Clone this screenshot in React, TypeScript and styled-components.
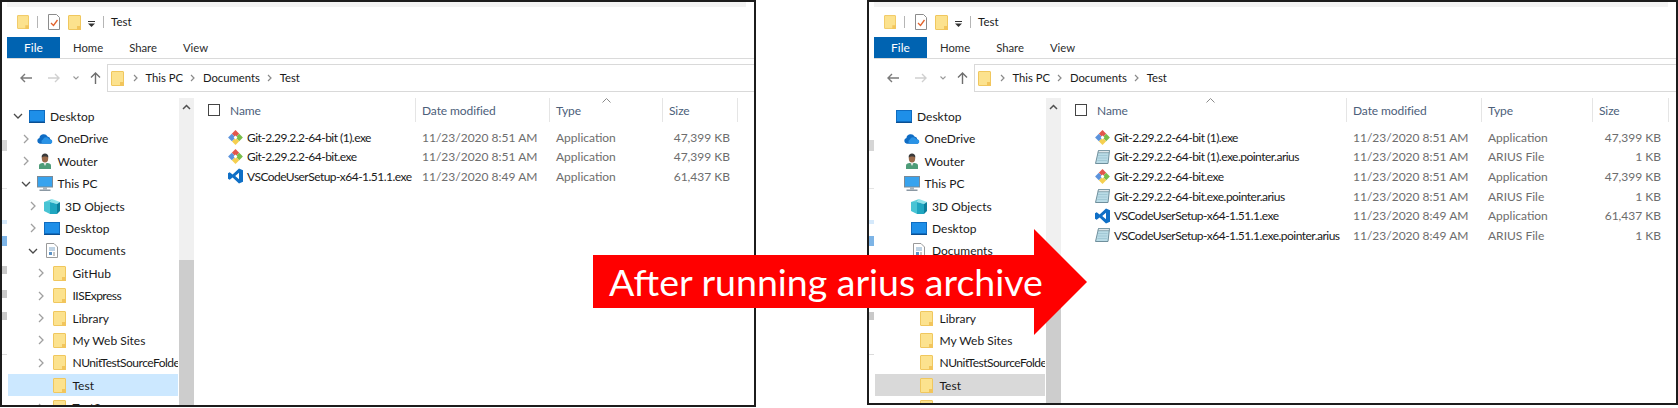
import React from "react";
import styled, { createGlobalStyle } from "styled-components";

const GlobalStyle = createGlobalStyle`
  html, body {
    margin: 0;
    padding: 0;
    background: #fff;
  }
  body {
    font-family: Lato, "Open Sans", sans-serif;
  }
`;

const uiFont = `Lato, "Open Sans", sans-serif`;

const Page = styled.div`
  position: relative;
  display: flex;
  justify-content: space-between;
  align-items: flex-start;
  width: 1678px;
  height: 408px;
  overflow: hidden;
`;

const Window = styled.section<{ $width: number; $height: number }>`
  box-sizing: border-box;
  display: flex;
  flex-direction: column;
  width: ${(p) => p.$width}px;
  height: ${(p) => p.$height}px;
  border: 2px solid #1c1c1c;
  padding-left: 5px;
  background-color: #fff;
  background-image: linear-gradient(
    to bottom,
    #fff 0 138px,
    #d6d6d6 138px 149px,
    #fff 149px 186px,
    #e4e4e4 186px 187px,
    #fff 187px 218px,
    #d5e9fb 218px 222px,
    #fff 222px 234px,
    #7db4e6 234px 244px,
    #fff 244px 264px,
    #c9c9c9 264px 272px,
    #fff 272px 288px,
    #c9c9c9 288px 296px,
    #fff 296px 310px,
    #c9c9c9 310px 318px,
    #fff 318px 352px,
    #dcdcdc 352px 353px,
    #fff 353px
  );
  background-size: 5px 100%;
  background-repeat: no-repeat;
  font-family: ${uiFont};
  font-size: 12px;
  overflow: hidden;
`;

const TopStrip = styled.div`
  height: 5px;
  flex: none;
  margin-right: 8px;
  background: #f3f3f3;
`;

const TitleBar = styled.div`
  display: flex;
  align-items: center;
  height: 30px;
  flex: none;
  padding-left: 10px;
  color: #1a1a1a;
`;

const TitleSep = styled.span<{ $gap: number }>`
  width: 1px;
  height: 12px;
  background: #b5b5b5;
  margin: 0 ${(p) => p.$gap}px 0 8px;
`;

const TitleText = styled.span`
  margin-bottom: 1px;
  font-size: 11.5px;
`;

const Tabs = styled.nav`
  display: flex;
  align-items: stretch;
  height: 22px;
  flex: none;
  box-sizing: border-box;
  border-bottom: 1px solid #dadada;
`;

const FileTab = styled.div`
  width: 53px;
  height: 21px;
  display: flex;
  align-items: center;
  justify-content: center;
  background: #0063b1;
  color: #fff;
`;

const Tab = styled.div<{ $left: number }>`
  display: flex;
  align-items: center;
  margin-left: ${(p) => p.$left}px;
  color: #2c2c2c;
  font-size: 11.3px;
`;

const AddressRow = styled.div`
  display: flex;
  height: 33px;
  flex: none;
  box-sizing: border-box;
  padding-top: 5px;
`;

const NavButtons = styled.div`
  display: flex;
  align-items: center;
  width: 100px;
  flex: none;
  padding-left: 13px;
  box-sizing: border-box;
`;

const AddressBar = styled.div`
  flex: 1;
  display: flex;
  align-items: center;
  box-sizing: border-box;
  border: 1px solid #d9d9d9;
  border-right: none;
  padding-left: 3px;
  color: #1a1a1a;
  font-size: 11.3px;
`;

const Crumb = styled.span`
  margin: 0 7.4px 1px;
`;

const Spacer = styled.span<{ $w: number }>`
  width: ${(p) => p.$w}px;
  flex: none;
`;

const Body = styled.div`
  flex: 1;
  display: flex;
  min-height: 0;
  padding-top: 6px;
`;

const Tree = styled.div`
  width: 172px;
  flex: none;
  box-sizing: border-box;
  padding: 7.3px 1px 0;
  overflow: hidden;
`;

const TreeRow = styled.div<{ $level: number; $selected?: string }>`
  display: flex;
  align-items: center;
  height: 22.4px;
  padding-left: ${(p) => 4 + p.$level * 7.5}px;
  background: ${(p) => p.$selected ?? "transparent"};
  color: #1a1a1a;
  white-space: nowrap;
  overflow: hidden;
`;

const TreeLabel = styled.span<{ $tight?: boolean }>`
  letter-spacing: ${(p) => (p.$tight ? "-0.5px" : "0")};
`;

const ChevronSlot = styled.span`
  display: flex;
  align-items: center;
  justify-content: center;
  width: 12px;
  flex: none;
  margin-right: 5px;
`;

const IconSlot = styled.span`
  display: flex;
  align-items: center;
  justify-content: center;
  width: 16px;
  flex: none;
  margin-right: 5px;
`;

const ScrollBar = styled.div`
  position: relative;
  width: 15px;
  flex: none;
  background: #f0f0f0;
  display: flex;
  flex-direction: column;
  align-items: center;
  padding-top: 6px;
  box-sizing: border-box;
`;

const ScrollThumb = styled.div`
  position: absolute;
  left: 0;
  right: 0;
  top: 162px;
  bottom: 0;
  background: #cdcdcd;
`;

const List = styled.div`
  flex: 1;
  min-width: 0;
`;

const Columns = styled.div<{ $cols: string }>`
  display: grid;
  grid-template-columns: ${(p) => p.$cols};
`;

const Header = styled(Columns)`
  height: 24px;
  margin-bottom: 5.5px;
  color: #4c607a;
`;

const HeaderCell = styled.div`
  position: relative;
  display: flex;
  align-items: center;
  box-sizing: border-box;
  padding-left: 6px;
  border-right: 1px solid #e5e5e5;
  letter-spacing: -0.1px;
`;

const NameHeaderCell = styled(HeaderCell)`
  padding-left: 14px;
`;

const CheckBox = styled.span`
  width: 12px;
  height: 12px;
  box-sizing: border-box;
  border: 1px solid #444;
  margin-right: 10px;
  flex: none;
`;

const SortCaret = styled.svg<{ $left: number }>`
  position: absolute;
  top: 0;
  left: ${(p) => p.$left}px;
`;

const FileRow = styled(Columns)`
  height: 19.6px;
  align-items: center;
  white-space: nowrap;
`;

const NameCell = styled.div`
  display: flex;
  align-items: center;
  padding-left: 34px;
  color: #1a1a1a;
  letter-spacing: -0.52px;
`;

const FileIcon = styled.span`
  display: flex;
  width: 15px;
  flex: none;
  margin-right: 4px;
`;

const MetaCell = styled.div<{ $right?: boolean }>`
  color: #6d6d6d;
  padding: 0 8px 0 6px;
  text-align: ${(p) => (p.$right ? "right" : "left")};
`;

const Arrow = styled.div`
  position: absolute;
  left: 593px;
  top: 229px;
  width: 494px;
  height: 106px;
  box-sizing: border-box;
  display: flex;
  align-items: center;
  padding: 0 0 2px 16px;
  background: #ff0000;
  clip-path: polygon(0 26px, 441px 26px, 441px 0, 100% 50%, 441px 100%, 441px 79px, 0 79px);
  color: #fff;
  font-family: ${uiFont};
  font-size: 37.5px;
  white-space: nowrap;
`;

const Folder = ({ w = 13, h = 15 }: { w?: number; h?: number }) => (
  <svg width={w} height={h} viewBox="0 0 13 15">
    <rect x="0.5" y="0.5" width="12" height="14" rx="0.5" fill="#fce28e" stroke="#f0c75e" />
    <rect x="9" y="11" width="4" height="4" fill="#f2c55c" />
  </svg>
);

const Chevron = ({ open }: { open?: boolean }) => (
  <svg width="10" height="10" viewBox="0 0 10 10" fill="none" strokeWidth="1.3">
    {open ? <path d="M1 3l4 4 4-4" stroke="#4a4a4a" /> : <path d="M3 1l4 4-4 4" stroke="#a0a0a0" />}
  </svg>
);

const CrumbArrow = () => (
  <svg width="5" height="8" viewBox="0 0 5 8" fill="none" stroke="#8a8a8a" strokeWidth="1.2">
    <path d="M1 1l3 3-3 3" />
  </svg>
);

const DesktopIcon = () => (
  <svg width="16" height="13" viewBox="0 0 16 13">
    <rect width="16" height="13" fill="#1e8fe8" />
    <rect y="11" width="16" height="2" fill="#0b4f91" />
    <rect x="0.5" y="0.5" width="15" height="11" fill="none" stroke="#0f6cc0" />
  </svg>
);

const OneDriveIcon = () => (
  <svg width="17" height="11" viewBox="0 0 17 11">
    <path d="M3 11a3 3 0 0 1-.4-5.9 4.6 4.6 0 0 1 8.6-1.7 3.4 3.4 0 0 1 3 3.2A2.3 2.3 0 0 1 14.6 11z" fill="#0f6cc4" />
    <path d="M6 11a2.4 2.4 0 0 1 .3-4.4 3.6 3.6 0 0 1 6.7-.2 2.3 2.3 0 0 1 1.6 4.6z" fill="#2a93e6" />
  </svg>
);

const UserIcon = () => (
  <svg width="14" height="16" viewBox="0 0 14 16">
    <path d="M1 16v-3.500C1 10.500 3 10 7 10s6 .5 6 2.500V16z" fill="#4d9c78" />
    <path d="M5.500 10h3L7 13z" fill="#e6e6e6" />
    <ellipse cx="7" cy="5.500" rx="3.200" ry="4" fill="#9a6a4a" />
    <path d="M3.600 4.500C3.600 1.500 5 .5 7 .5s3.400 1 3.400 4C9 3 5 3 3.600 4.500z" fill="#3a3a3a" />
  </svg>
);

const PcIcon = () => (
  <svg width="16" height="15" viewBox="0 0 16 15">
    <rect x="0.5" y="0.5" width="15" height="10.500" fill="#38a3ee" stroke="#7b8a96" />
    <rect x="6" y="11" width="4" height="2.500" fill="#a9b3bb" />
    <rect x="2.500" y="13.500" width="11" height="1.500" fill="#8b98a3" />
  </svg>
);

const CubeIcon = () => (
  <svg width="16" height="15" viewBox="0 0 16 15">
    <path d="M8 0l8 3-3 2-7-2z" fill="#8fe4ea" />
    <path d="M0 3l8-3-2 3z" fill="#5fd0da" />
    <path d="M0 3l6 0 0 12-6-3z" fill="#48c4d4" />
    <path d="M6 3l7 2v10H6z" fill="#1fa6c0" />
    <path d="M13 5l3-2v9l-3 3z" fill="#0c7f9c" />
  </svg>
);

const DocsIcon = () => (
  <svg width="12" height="15" viewBox="0 0 12 15">
    <path d="M.5.5h7.500l3.500 3.500v10.500H.5z" fill="#fff" stroke="#9a9a9a" />
    <path d="M3 5h6M3 7h6" stroke="#7fa6c9" />
    <rect x="3" y="9" width="3" height="3" fill="#5e93c4" />
    <path d="M7 10h2M7 12h2" stroke="#8f8f8f" />
  </svg>
);

const ChecklistIcon = () => (
  <svg width="12" height="16" viewBox="0 0 12 16" fill="none">
    <path d="M.5.5h8l3 3v12H.5z" fill="#fff" stroke="#8c8c8c" />
    <path d="M3 9l2.500 2.500L9.500 6" stroke="#e2622b" strokeWidth="1.300" />
  </svg>
);

const GitIcon = () => (
  <svg width="15" height="15" viewBox="0 0 15 15">
    <path d="M7.500 7.500L3.800 3.800 7.500.1l3.700 3.700z" fill="#e2574c" />
    <path d="M7.500 7.500l3.700-3.700 3.700 3.700-3.700 3.700z" fill="#79bd4b" />
    <path d="M7.500 7.500l3.700 3.700-3.700 3.700-3.700-3.700z" fill="#f5cf4f" />
    <path d="M7.500 7.500l-3.700 3.700L.1 7.500l3.700-3.700z" fill="#5c93dc" />
    <path d="M7.500 5.600l1.900 1.900-1.900 1.900-1.900-1.900z" fill="#fff" />
  </svg>
);

const VsCodeIcon = () => (
  <svg width="15" height="16" viewBox="0 0 15 16">
    <path d="M11 .5L15 2.300v11.400L11 15.500 4.600 9.400 1.700 11.700 0 10.800V5.200l1.700-.9 2.900 2.300zM11 4.800L7.200 8l3.800 3.200z" fill="#0f6fc6" />
  </svg>
);

// slanted notepad used for files with no registered app
const PointerIcon = () => (
  <svg width="15" height="16" viewBox="0 0 15 16">
    <path d="M3.500 1.500h11l-1.500 13H.5z" fill="#b9dbe6" stroke="#6f8f9c" />
    <path d="M3.500 1.500h11l-.3 2.200h-11z" fill="#dfe7ea" stroke="#6f8f9c" strokeWidth=".7" />
    <path d="M3 6.500h9.500M2.700 9h9.500M2.400 11.500h9.500" stroke="#9cc4d2" strokeWidth=".8" />
  </svg>
);

const treeRows: { label: string; level: number; chevron?: "open" | "closed"; tight?: boolean; icon: React.ReactNode }[] = [
  { label: "Desktop", level: 0, chevron: "open", icon: <DesktopIcon /> },
  { label: "OneDrive", level: 1, chevron: "closed", icon: <OneDriveIcon /> },
  { label: "Wouter", level: 1, chevron: "closed", icon: <UserIcon /> },
  { label: "This PC", level: 1, chevron: "open", icon: <PcIcon /> },
  { label: "3D Objects", level: 2, chevron: "closed", icon: <CubeIcon /> },
  { label: "Desktop", level: 2, chevron: "closed", icon: <DesktopIcon /> },
  { label: "Documents", level: 2, chevron: "open", icon: <DocsIcon /> },
  { label: "GitHub", level: 3, chevron: "closed", icon: <Folder /> },
  { label: "IISExpress", level: 3, chevron: "closed", tight: true, icon: <Folder /> },
  { label: "Library", level: 3, chevron: "closed", icon: <Folder /> },
  { label: "My Web Sites", level: 3, chevron: "closed", icon: <Folder /> },
  { label: "NUnitTestSourceFolder", level: 3, chevron: "closed", tight: true, icon: <Folder /> },
  { label: "Test", level: 3, icon: <Folder /> },
  { label: "Test2", level: 3, chevron: "closed", icon: <Folder /> },
];

type FileEntry = { name: string; date: string; type: string; size: string; icon: React.ReactNode };

const git = <GitIcon />;
const code = <VsCodeIcon />;
const pointer = <PointerIcon />;

const beforeFiles: FileEntry[] = [
  { name: "Git-2.29.2.2-64-bit (1).exe", date: "11/23/2020 8:51 AM", type: "Application", size: "47,399 KB", icon: git },
  { name: "Git-2.29.2.2-64-bit.exe", date: "11/23/2020 8:51 AM", type: "Application", size: "47,399 KB", icon: git },
  { name: "VSCodeUserSetup-x64-1.51.1.exe", date: "11/23/2020 8:49 AM", type: "Application", size: "61,437 KB", icon: code },
];

const afterFiles: FileEntry[] = [
  beforeFiles[0],
  { name: "Git-2.29.2.2-64-bit (1).exe.pointer.arius", date: "11/23/2020 8:51 AM", type: "ARIUS File", size: "1 KB", icon: pointer },
  beforeFiles[1],
  { name: "Git-2.29.2.2-64-bit.exe.pointer.arius", date: "11/23/2020 8:51 AM", type: "ARIUS File", size: "1 KB", icon: pointer },
  beforeFiles[2],
  { name: "VSCodeUserSetup-x64-1.51.1.exe.pointer.arius", date: "11/23/2020 8:49 AM", type: "ARIUS File", size: "1 KB", icon: pointer },
];

type ExplorerProps = {
  width: number;
  height: number;
  cols: string;
  files: FileEntry[];
  caretIn: number;
  caretLeft: number;
  showChevrons: boolean;
  selectedColor: string;
};

const Explorer = ({ width, height, cols, files, caretIn, caretLeft, showChevrons, selectedColor }: ExplorerProps) => {
  const caret = (
    <SortCaret $left={caretLeft} width="9" height="5" viewBox="0 0 9 5" fill="none" stroke="#8a8a8a">
      <path d="M.5 4.500l4-4 4 4" />
    </SortCaret>
  );
  return (
    <Window $width={width} $height={height}>
      <TopStrip />
      <TitleBar>
        <Folder h={14} w={12} />
        <TitleSep $gap={10} />
        <ChecklistIcon />
        <Spacer $w={8} />
        <Folder />
        <svg width="7" height="6" viewBox="0 0 7 6" style={{ margin: "3px 0 0 7px" }}>
          <rect width="7" height="1" fill="#333" />
          <path d="M0 2.500h7L3.500 6z" fill="#333" />
        </svg>
        <TitleSep $gap={7} />
        <TitleText>Test</TitleText>
      </TitleBar>
      <Tabs>
        <FileTab>File</FileTab>
        <Tab $left={13}>Home</Tab>
        <Tab $left={26}>Share</Tab>
        <Tab $left={26}>View</Tab>
      </Tabs>
      <AddressRow>
        <NavButtons>
          <svg width="12" height="10" viewBox="0 0 12 10" fill="none" stroke="#7a7a7a" strokeWidth="1.400">
            <path d="M12 5H1M5 1L1 5l4 4" />
          </svg>
          <svg width="12" height="10" viewBox="0 0 12 10" fill="none" stroke="#d0d0d0" strokeWidth="1.400" style={{ marginLeft: 16 }}>
            <path d="M0 5h11M7 1l4 4-4 4" />
          </svg>
          <svg width="6" height="4" viewBox="0 0 6 4" fill="none" stroke="#9a9a9a" strokeWidth="1.100" style={{ marginLeft: 13 }}>
            <path d="M.5.5L3 3 5.500.5" />
          </svg>
          <svg width="11" height="12" viewBox="0 0 11 12" fill="none" stroke="#6e6e6e" strokeWidth="1.400" style={{ marginLeft: 11 }}>
            <path d="M5.500 12V1M1 5.500l4.500-4.500 4.500 4.500" />
          </svg>
        </NavButtons>
        <AddressBar>
          <Folder />
          <Spacer $w={9} />
          <CrumbArrow />
          <Crumb>This PC</Crumb>
          <CrumbArrow />
          <Crumb>Documents</Crumb>
          <CrumbArrow />
          <Crumb>Test</Crumb>
        </AddressBar>
      </AddressRow>
      <Body>
        <Tree>
          {treeRows.map((row, i) => (
            <TreeRow key={i} $level={row.level} $selected={row.label === "Test" ? selectedColor : undefined}>
              <ChevronSlot>
                {showChevrons && row.chevron ? <Chevron open={row.chevron === "open"} /> : null}
              </ChevronSlot>
              <IconSlot>{row.icon}</IconSlot>
              <TreeLabel $tight={row.tight}>{row.label}</TreeLabel>
            </TreeRow>
          ))}
        </Tree>
        <ScrollBar>
          <svg width="9" height="6" viewBox="0 0 9 6" fill="none" stroke="#505050" strokeWidth="1.500">
            <path d="M1 5l3.500-3.500L8 5" />
          </svg>
          <ScrollThumb />
        </ScrollBar>
        <List>
          <Header $cols={cols}>
            <NameHeaderCell>
              <CheckBox />
              Name
              {caretIn === 0 && caret}
            </NameHeaderCell>
            <HeaderCell>Date modified</HeaderCell>
            <HeaderCell>
              Type
              {caretIn === 2 && caret}
            </HeaderCell>
            <HeaderCell>Size</HeaderCell>
          </Header>
          {files.map((file) => (
            <FileRow key={file.name} $cols={cols}>
              <NameCell>
                <FileIcon>{file.icon}</FileIcon>
                {file.name}
              </NameCell>
              <MetaCell>{file.date}</MetaCell>
              <MetaCell>{file.type}</MetaCell>
              <MetaCell $right>{file.size}</MetaCell>
            </FileRow>
          ))}
        </List>
      </Body>
    </Window>
  );
};

const App: React.FC = () => {
  return (
    <Page>
      <GlobalStyle />
      <Explorer
        width={756}
        height={407}
        cols="222px 134px 113px 75px"
        files={beforeFiles}
        caretIn={2}
        caretLeft={52}
        showChevrons
        selectedColor="#cce8ff"
      />
      <Explorer
        width={811}
        height={405}
        cols="286px 135px 111px 76px"
        files={afterFiles}
        caretIn={0}
        caretLeft={145}
        showChevrons={false}
        selectedColor="#d9d9d9"
      />
      <Arrow>After running arius archive</Arrow>
    </Page>
  );
};

export default App;
